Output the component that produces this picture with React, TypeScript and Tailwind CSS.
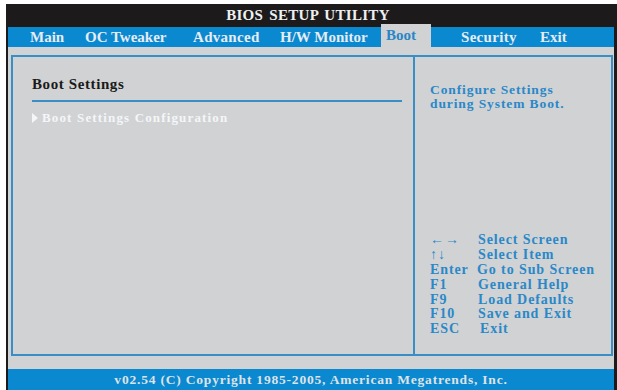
const helpRows = [
  { key: "\u2190\u2192", desc: "Select Screen", shift: "" },
  { key: "\u2191\u2193", desc: "Select Item", shift: "" },
  { key: "Enter", desc: "Go to Sub Screen", shift: "-ml-[1px]" },
  { key: "F1", desc: "General Help", shift: "" },
  { key: "F9", desc: "Load Defaults", shift: "" },
  { key: "F10", desc: "Save and Exit", shift: "" },
  { key: "ESC", desc: "Exit", shift: "ml-[2px]" },
];

export default function App() {
  return (
    <div
      className="h-[390px] w-[617px] overflow-hidden bg-white pl-[6px] pt-[4px]"
      style={{ fontFamily: '"Liberation Serif", "Times New Roman", serif' }}
    >
      <div className="flex h-full flex-col border-l-2 border-r-[3px] border-[#1c1a1a] bg-[#d1d2d4] font-bold">
        {/* title */}
        <div className="flex h-[23px] items-center justify-center bg-[#1c1a1a] pr-[6px] text-[15px] tracking-[0.3px] text-[#eef0f2] [word-spacing:2px]">
          BIOS SETUP UTILITY
        </div>

        {/* tabs */}
        <div className="flex h-[20px] items-center bg-[#0a88d0] pl-[22px] text-[15px] leading-[20px] text-[#e6ecf1]">
          <span className="w-[55px]">Main</span>
          <span className="w-[108px]">OC Tweaker</span>
          <span className="w-[87px] tracking-[0.3px]">Advanced</span>
          <span className="w-[101px]">H/W Monitor</span>
          <span className="-mt-[3px] h-[23px] w-[50px] bg-[#d1d2d4] pl-[5px] pt-[1px] text-[#2a86c6]">Boot</span>
          <span className="w-[30px]" />
          <span className="w-[79px] tracking-[0.3px]">Security</span>
          <span>Exit</span>
        </div>

        {/* body */}
        <div className="flex flex-1 pb-[13px] pl-[3px] pr-[1px] pt-[8px]">
          <div className="flex flex-1 border-2 border-[#3a8ec6]">
            <div className="w-[400px] pl-[19px] pr-[11px] pt-[18px]">
              <div className="h-[18px] text-[15px] leading-[18px] tracking-[0.6px] text-[#1a1a1a]">
                Boot Settings
              </div>
              <div className="mt-[7px] h-[2px] bg-[#3a8ec6]" />
              <div className="mt-[8px] flex h-[16px] items-center text-[13px] tracking-[1.15px] text-[#f4f6f8]">
                <svg width="6" height="10" viewBox="0 0 6 10" className="mr-[4px]">
                  <path d="M0 0 L6 5 L0 10 Z" fill="#f4f6f8" />
                </svg>
                Boot Settings Configuration
              </div>
            </div>
            <div className="w-[2px] bg-[#3a8ec6]" />
            <div className="flex flex-1 flex-col pb-[17px] pl-[15px] pt-[26px] text-[#2a88c8]">
              <div className="text-[13.5px] leading-[14px] tracking-[0.9px]">
                <div>Configure Settings</div>
                <div>during System Boot.</div>
              </div>
              <div className="mt-auto flex flex-col text-[14px] leading-[14.8px] tracking-[0.9px]">
                {helpRows.map((r) => (
                  <div key={r.key} className="flex">
                    <span className="w-[48px]">{r.key}</span>
                    <span className={r.shift}>{r.desc}</span>
                  </div>
                ))}
              </div>
            </div>
          </div>
        </div>

        {/* footer */}
        <div className="flex h-[21px] items-center justify-center bg-[#0a88d0] pt-[1px] text-[13.5px] tracking-[0.8px] text-[#dfe3e7]">
          v02.54 (C) Copyright 1985-2005, American Megatrends, Inc.
        </div>
      </div>
    </div>
  );
}
